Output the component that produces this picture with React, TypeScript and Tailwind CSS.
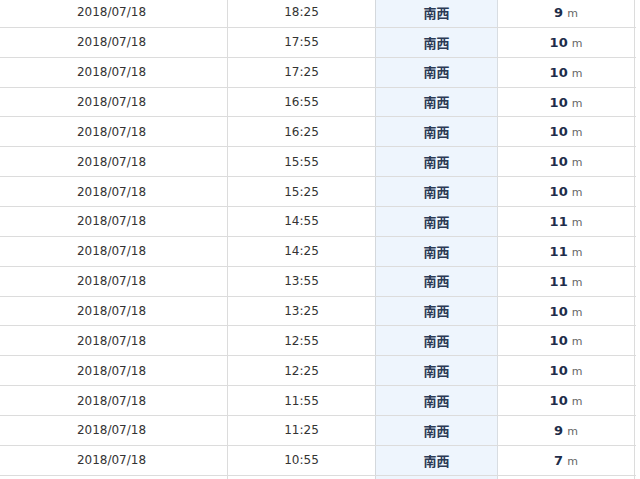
import React from "react";

const rows = [
  { time: "18:25", speed: 9 },
  { time: "17:55", speed: 10 },
  { time: "17:25", speed: 10 },
  { time: "16:55", speed: 10 },
  { time: "16:25", speed: 10 },
  { time: "15:55", speed: 10 },
  { time: "15:25", speed: 10 },
  { time: "14:55", speed: 11 },
  { time: "14:25", speed: 11 },
  { time: "13:55", speed: 11 },
  { time: "13:25", speed: 10 },
  { time: "12:55", speed: 10 },
  { time: "12:25", speed: 10 },
  { time: "11:55", speed: 10 },
  { time: "11:25", speed: 9 },
  { time: "10:55", speed: 7 },
];

const Row = ({ time, speed }: { time?: string; speed?: number }) => (
  <div className="flex h-[29.87px] border-b border-[#dcdcdc] text-[12px] text-[#333333]">
    <div className="w-[232px] flex items-center justify-center border-r border-[#dcdcdc]">
      {time ? "2018/07/18" : ""}
    </div>
    <div className="w-[148px] flex items-center justify-center border-r border-[#d4d8dc]">
      {time}
    </div>
    <div className="w-[122px] flex items-center justify-center bg-[#eef5fd] border-r border-[#d8dde2] font-['Noto_Sans_CJK_JP',sans-serif] font-bold text-[13px] text-[#2b3a55]">
      {time ? "南西" : ""}
    </div>
    <div className="w-[137px] flex items-center justify-center border-r border-[#dcdcdc]">
      {time && (
        <span className="leading-none">
          <span className="font-bold text-[13px] text-[#1e2d4a]">{speed}</span>
          <span className="ml-[4px] text-[11px] text-[#666666]">m</span>
        </span>
      )}
    </div>
  </div>
);

const App = () => {
  return (
    <div className="w-[640px] h-[479px] overflow-hidden bg-white">
      <div className="-ml-[4px] -mt-[2px] w-[640px] font-['DejaVu_Sans','Noto_Sans_CJK_JP',sans-serif]">
        {rows.map((r, i) => (
          <Row key={i} time={r.time} speed={r.speed} />
        ))}
        <Row />
      </div>
    </div>
  );
};

export default App;
